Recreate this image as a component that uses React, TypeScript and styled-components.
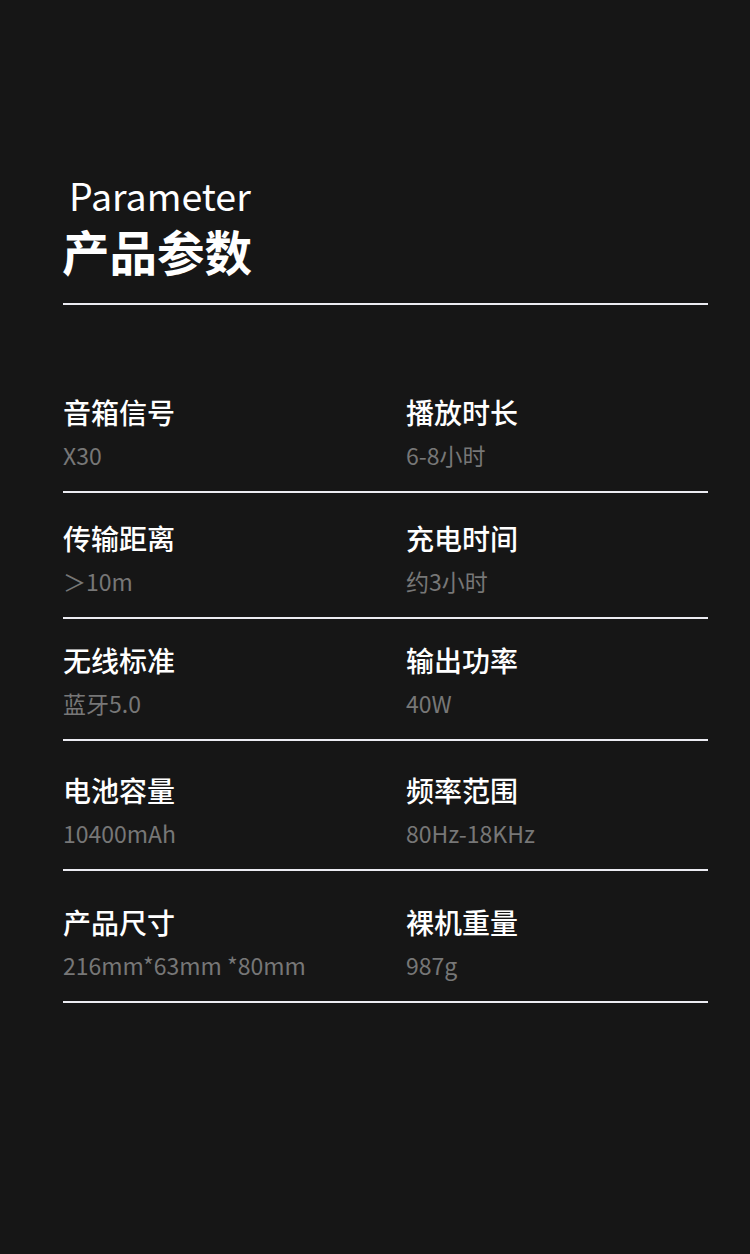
import React from "react";
import styled, { createGlobalStyle } from "styled-components";

const GlobalStyle = createGlobalStyle`
  html, body {
    margin: 0;
    padding: 0;
    background: #161616;
  }
  body {
    font-family: "Noto Sans CJK SC", "Noto Sans", sans-serif;
  }
`;

const Page = styled.div`
  width: 750px;
  min-height: 1254px;
  box-sizing: border-box;
  padding: 168px 42px 0 63px;
  background: #161616;
`;

const Header = styled.div`
  display: flex;
  flex-direction: column;
  border-bottom: 2px solid #ececf2;
  padding-bottom: 22px;
`;

const EnTitle = styled.div`
  font-size: 37.5px;
  line-height: 53px;
  font-weight: 400;
  color: #ffffff;
  padding-left: 6px;
`;

const CnTitle = styled.div`
  font-size: 47.5px;
  line-height: 60px;
  font-weight: 700;
  color: #ffffff;
  margin-left: -1px;
`;

const Row = styled.div<{ $top: number }>`
  display: grid;
  grid-template-columns: 343px 1fr;
  padding: ${(p) => p.$top}px 0 20px;
  border-bottom: 2px solid #ececf2;
`;

const Cell = styled.div`
  display: flex;
  flex-direction: column;
  gap: 9px;
`;

const Label = styled.div`
  font-size: 28px;
  line-height: 36px;
  font-weight: 500;
  color: #ffffff;
`;

const Value = styled.div`
  font-size: 23px;
  line-height: 32px;
  font-weight: 400;
  color: #777777;
`;

const rows = [
  { top: 89, items: [["音箱信号", "X30"], ["播放时长", "6-8小时"]] },
  { top: 27, items: [["传输距离", "＞10m"], ["充电时间", "约3小时"]] },
  { top: 23, items: [["无线标准", "蓝牙5.0"], ["输出功率", "40W"]] },
  { top: 31, items: [["电池容量", "10400mAh"], ["频率范围", "80Hz-18KHz"]] },
  { top: 33, items: [["产品尺寸", "216mm*63mm *80mm"], ["裸机重量", "987g"]] },
];

export default function App() {
  return (
    <Page>
      <GlobalStyle />
      <Header>
        <EnTitle>Parameter</EnTitle>
        <CnTitle>产品参数</CnTitle>
      </Header>
      {rows.map((row, i) => (
        <Row key={i} $top={row.top}>
          {row.items.map(([label, value]) => (
            <Cell key={label}>
              <Label>{label}</Label>
              <Value>{value}</Value>
            </Cell>
          ))}
        </Row>
      ))}
    </Page>
  );
}
